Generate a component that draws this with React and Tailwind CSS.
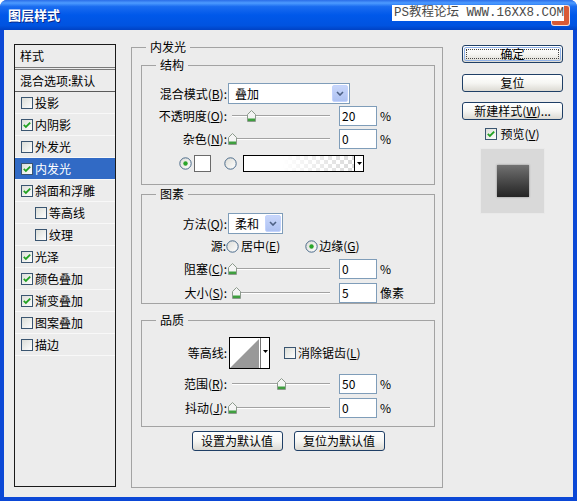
import React from "react";

// --- small XP-style widgets ---
const CheckBox = ({ checked }) => (
  <svg width="12" height="12" viewBox="0 0 12 12" className="shrink-0 block">
    <defs>
      <linearGradient id="cbFill" x1="0" y1="0" x2="1" y2="1">
        <stop offset="0" stopColor="#d9dcd6" />
        <stop offset="1" stopColor="#ffffff" />
      </linearGradient>
    </defs>
    <rect x="0.5" y="0.5" width="11" height="11" fill="url(#cbFill)" stroke="#3a5570" />
    {checked && (
      <path d="M2.8 5.8 L4.9 8 L9.2 3.6" stroke="#21a121" strokeWidth="1.8" fill="none" />
    )}
  </svg>
);

const Radio = ({ checked }) => (
  <svg width="13" height="13" viewBox="0 0 13 13" className="shrink-0 block">
    <defs>
      <linearGradient id="rdFill" x1="0" y1="0" x2="1" y2="1">
        <stop offset="0" stopColor="#dcdcd6" />
        <stop offset="1" stopColor="#ffffff" />
      </linearGradient>
    </defs>
    <circle cx="6.5" cy="6.5" r="5.7" fill="url(#rdFill)" stroke="#4a6a8a" />
    {checked && <circle cx="6.5" cy="6.5" r="2.2" fill="#2aa52a" />}
  </svg>
);

const DownArrow = () => (
  <svg width="5" height="3" viewBox="0 0 5 3" className="block">
    <polygon points="0,0 5,0 2.5,3" fill="#000" />
  </svg>
);

const Combo = ({ value, className }) => (
  <div className={`ml-[1px] h-[21px] bg-white border border-[#7f9db9] flex items-center ${className}`}>
    <span className="flex-1 pl-[6px]">{value}</span>
    <div className="w-[16px] h-[17px] mr-[1px] rounded-[2px] border border-[#c3d3fd] bg-linear-to-b from-[#c8d6fa] to-[#aec2f2] flex items-center justify-center">
      <svg width="8" height="5" viewBox="0 0 8 5" className="block">
        <path d="M1 1 L4 4 L7 1" stroke="#4d6185" strokeWidth="1.6" fill="none" />
      </svg>
    </div>
  </div>
);

const Slider = ({ pct }) => (
  <div className="relative ml-[1px] w-[104px] h-[14px] shrink-0">
    <div className="absolute left-[4px] w-[98px] top-[6px] h-[2px] border-t border-[#a2a2a2] bg-white" />
    <svg
      className="absolute top-[1px] block"
      style={{ left: 4 + 0.98 * pct - 4.5 }}
      width="9"
      height="12"
      viewBox="0 0 9 12"
    >
      <path d="M0.5 4.5 L4.5 0.5 L8.5 4.5 V11.5 H0.5 Z" fill="#f4f4f4" stroke="#8c9a8c" />
      <rect x="1" y="8.5" width="7" height="2.5" fill="#3f9f3f" />
    </svg>
  </div>
);

const NumBox = ({ value }) => (
  <div className="ml-[7px] w-[38px] h-[20px] shrink-0 bg-white border border-[#7f9db9] flex items-center pl-[2px]">
    {value}
  </div>
);

const Lbl = ({ children }) => <div className="w-[85px] shrink-0 text-right">{children}</div>;

const SliderRow = ({ label, pct, value, unit, className }) => (
  <div className={`flex items-center h-[20px] ${className}`}>
    <Lbl>{label}</Lbl>
    <Slider pct={pct} />
    <NumBox value={value} />
    <span className="ml-[3px]">{unit}</span>
  </div>
);

const Group = ({ title, className, children }) => (
  <fieldset className={`border border-[#a3a3a3] ${className}`}>
    <legend className="ml-[14px] px-[4px] leading-[16px]">{title}</legend>
    {children}
  </fieldset>
);

const XpButton = ({ children, className, isDefault }) => (
  <div
    className={`relative flex items-center justify-center rounded-[3px] border border-[#1f3f66] bg-linear-to-b from-white via-[#f6f6f3] to-[#dcdad3] ${className}`}
  >
    {isDefault && (
      <div className="absolute inset-[1px] rounded-[2px] border border-[#8fb1e8]">
        <div className="absolute inset-[1px] border border-dotted border-[#444]" />
      </div>
    )}
    <span className="relative">{children}</span>
  </div>
);

const styleItems = [
  { t: "投影", c: false },
  { t: "内阴影", c: true },
  { t: "外发光", c: false },
  { t: "内发光", c: true, sel: true },
  { t: "斜面和浮雕", c: true },
  { t: "等高线", c: false, sub: true },
  { t: "纹理", c: false, sub: true },
  { t: "光泽", c: true },
  { t: "颜色叠加", c: true },
  { t: "渐变叠加", c: true },
  { t: "图案叠加", c: false },
  { t: "描边", c: false },
];

export default function App() {
  return (
    <div className="w-[577px] h-[501px] bg-white font-['Noto_Sans_CJK_SC',sans-serif] text-[12px] leading-[16px] text-black">
      <div className="w-full h-full flex flex-col bg-[#0b48d6] rounded-t-[7px] overflow-hidden">
        {/* --- TITLE BAR --- */}
        <div className="relative h-[30px] shrink-0 flex items-center pl-[8px] bg-[linear-gradient(to_bottom,#2a6de8_0%,#4d9bff_10%,#1a6cf0_22%,#0058ea_50%,#0053e0_85%,#0042c4_100%)]">
          <span className="text-white font-bold text-[13px] [text-shadow:1px_1px_0_#0a2a8a]">图层样式</span>
          <div className="absolute right-[7px] top-[5px] w-[19px] h-[21px] rounded-[3px] bg-[#d95a35] border border-white/80" />
          <div className="absolute left-[392px] top-[5px] w-[172px] h-[16px] bg-white flex items-center pl-[2px] font-['Liberation_Mono','Noto_Sans_CJK_SC',monospace] text-[12.5px] text-[#4a4a4a] whitespace-nowrap">
            PS教程论坛 WWW.16XX8.COM
          </div>
        </div>

        {/* --- DIALOG BODY --- */}
        <div className="flex-1 mx-[4px] mb-[4px] bg-[#ececec] flex items-start pt-[9px] pl-[10px]">
          {/* Styles list */}
          <div className="mt-[5px] w-[102px] h-[443px] shrink-0 border border-[#1a1a1a] flex flex-col">
            <div className="h-[25px] pl-[5px] flex items-center border-b-[3px] border-double border-[#7a7a7a]">样式</div>
            <div className="h-[22px] pl-[5px] flex items-center border-b border-[#5a5a5a]">混合选项:默认</div>
            {styleItems.map((it) => (
              <div
                key={it.t}
                className={`h-[22px] flex items-center gap-[2px] border-b border-[#f8f8f8] ${
                  it.sub ? "pl-[20px]" : "pl-[6px]"
                } ${it.sel ? "bg-[#316ac5] text-white" : ""}`}
              >
                <CheckBox checked={it.c} />
                <span>{it.t}</span>
              </div>
            ))}
          </div>

          {/* Inner glow settings */}
          <fieldset className="ml-[15px] w-[312px] h-[449px] shrink-0 border border-[#a3a3a3]">
            <legend className="ml-[14px] px-[4px] leading-[16px]">内发光</legend>
            <div className="pl-[9px] pr-[7px]">
              {/* Structure */}
              <Group title="结构" className="mt-[2px] h-[128px]">
                <div className="flex items-center mt-[10px] h-[21px]">
                  <Lbl>
                    混合模式(<u>B</u>):
                  </Lbl>
                  <Combo value="叠加" className="w-[122px]" />
                </div>
                <SliderRow
                  className="mt-[2px]"
                  label={<>不透明度(<u>O</u>):</>}
                  pct={20}
                  value="20"
                  unit="%"
                />
                <SliderRow
                  className="mt-[3px]"
                  label={<>杂色(<u>N</u>):</>}
                  pct={0}
                  value="0"
                  unit="%"
                />
                <div className="flex items-center mt-[6px] h-[17px] pl-[37px]">
                  <Radio checked />
                  <div className="ml-[2px] w-[17px] h-[17px] bg-white border border-[#6a6a6a]" />
                  <div className="ml-[13px]">
                    <Radio />
                  </div>
                  <div className="ml-[6px] w-[121px] h-[17px] border border-black flex">
                    <div className="flex-1 bg-[conic-gradient(#dadada_25%,#ffffff_0_50%,#dadada_0_75%,#ffffff_0)] bg-[length:8px_8px]">
                      <div className="w-full h-full bg-linear-to-r from-white from-35% to-transparent" />
                    </div>
                    <div className="w-[9px] border-l border-black bg-white flex items-center justify-center">
                      <DownArrow />
                    </div>
                  </div>
                </div>
              </Group>

              {/* Elements */}
              <Group title="图素" className="mt-[1px] h-[118px]">
                <div className="flex items-center mt-[11px] h-[21px]">
                  <Lbl>
                    方法(<u>Q</u>):
                  </Lbl>
                  <Combo value="柔和" className="w-[55px]" />
                </div>
                <div className="flex items-center mt-[4px] h-[16px]">
                  <div className="w-[84px] shrink-0 text-right">源:</div>
                  <Radio />
                  <span className="ml-[2px]">
                    居中(<u>E</u>)
                  </span>
                  <div className="ml-[25px]">
                    <Radio checked />
                  </div>
                  <span className="ml-[1px]">
                    边缘(<u>G</u>)
                  </span>
                </div>
                <SliderRow
                  className="mt-[5px]"
                  label={<>阻塞(<u>C</u>):</>}
                  pct={0}
                  value="0"
                  unit="%"
                />
                <SliderRow
                  className="mt-[4px]"
                  label={<>大小(<u>S</u>):</>}
                  pct={5}
                  value="5"
                  unit="像素"
                />
              </Group>

              {/* Quality */}
              <Group title="品质" className="mt-[8px] h-[115px]">
                <div className="flex items-center mt-[9px] h-[32px]">
                  <Lbl>等高线:</Lbl>
                  <div className="ml-[2px] w-[41px] h-[32px] border border-black bg-white flex">
                    <svg width="30" height="30" viewBox="0 0 30 30" className="block">
                      <polygon points="0,30 29,1 29,30" fill="#999" />
                    </svg>
                    <div className="w-[9px] border-l border-[#777] flex justify-center pt-[12px]">
                      <DownArrow />
                    </div>
                  </div>
                  <div className="ml-[14px]">
                    <CheckBox />
                  </div>
                  <span className="ml-[2px]">
                    消除锯齿(<u>L</u>)
                  </span>
                </div>
                <SliderRow
                  className="mt-[5px]"
                  label={<>范围(<u>R</u>):</>}
                  pct={50}
                  value="50"
                  unit="%"
                />
                <SliderRow
                  className="mt-[4px]"
                  label={<>抖动(<u>J</u>):</>}
                  pct={0}
                  value="0"
                  unit="%"
                />
              </Group>

              <div className="mt-[4px] flex justify-center gap-[11px]">
                <XpButton className="w-[91px] h-[20px]">设置为默认值</XpButton>
                <XpButton className="w-[91px] h-[20px]">复位为默认值</XpButton>
              </div>
            </div>
          </fieldset>

          {/* Right buttons column */}
          <div className="ml-[19px] mt-[6px] w-[101px] shrink-0 flex flex-col items-center">
            <XpButton isDefault className="w-[101px] h-[18px]">
              确定
            </XpButton>
            <XpButton className="mt-[11px] w-[101px] h-[18px]">复位</XpButton>
            <XpButton className="mt-[10px] w-[101px] h-[18px]">
              新建样式(<u>W</u>)...
            </XpButton>
            <div className="mt-[8px] h-[12px] flex items-center gap-[3px]">
              <CheckBox checked />
              <span>
                预览(<u>V</u>)
              </span>
            </div>
            <div className="mt-[8px] w-[65px] h-[66px] bg-[#d9d9d9] border border-[#e9e9e9] flex items-center justify-center">
              <div className="w-[32px] h-[32px] bg-linear-to-b from-[#727272] to-[#252525] shadow-[0_0_2px_#888]" />
            </div>
          </div>
        </div>
      </div>
    </div>
  );
}
